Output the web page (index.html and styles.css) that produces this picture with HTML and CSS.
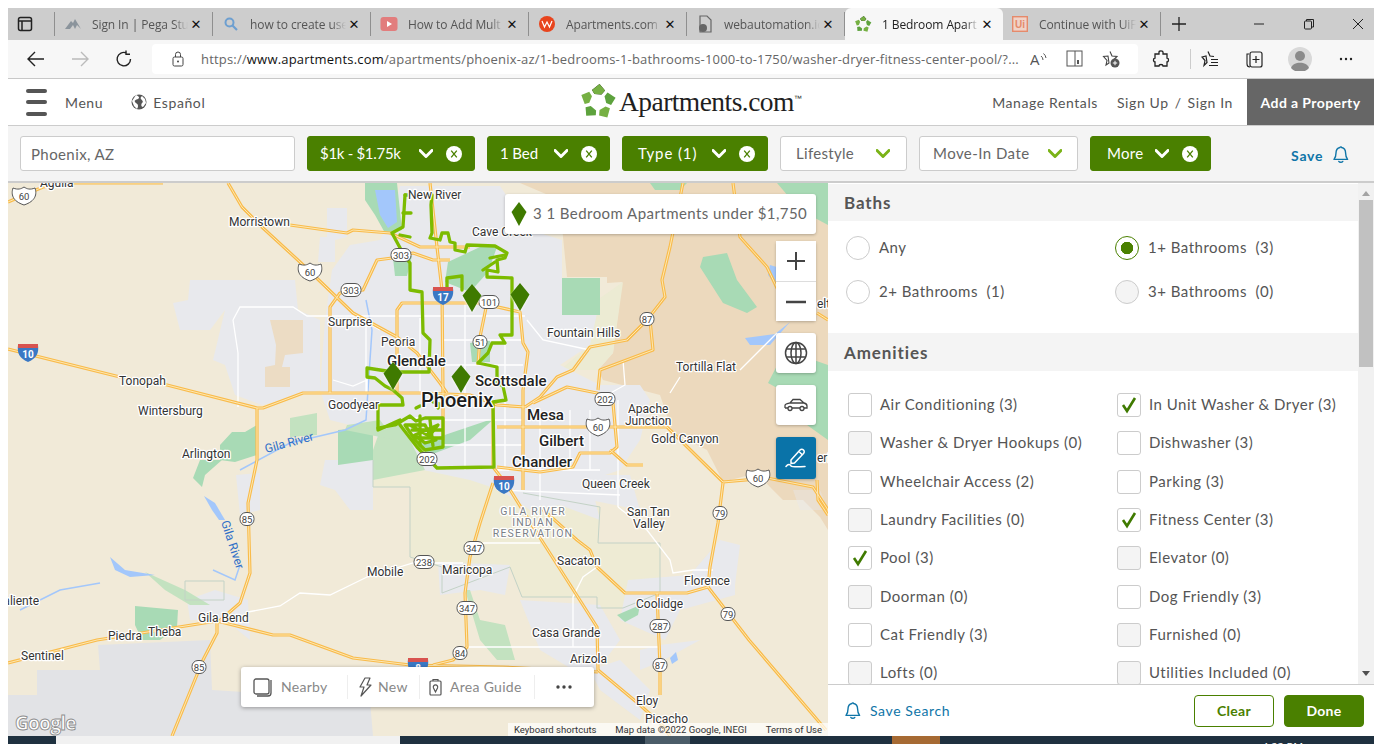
FILE: index.html
```html
<!DOCTYPE html>
<html lang="en">
<head>
<meta charset="utf-8">
<title>1 Bedroom Apartments</title>
<link rel="stylesheet" href="styles.css">
</head>
<body>
<svg class="defs" width="0" height="0" aria-hidden="true">
  <defs>
    <g id="wheel">
      <polygon id="wp" points="-6,-12 1.500,-18 7,-11.500 3.500,-7.500 -3.500,-8"/>
      <use href="#wp" fill="#76b043"/>
      <use href="#wp" transform="rotate(72)" fill="#5da23d"/>
      <use href="#wp" transform="rotate(144)" fill="#76b043"/>
      <use href="#wp" transform="rotate(216)" fill="#5da23d"/>
      <use href="#wp" transform="rotate(288)" fill="#76b043"/>
    </g>
    <g id="chev"><path d="M1 1.500 L7 7.500 L13 1.500" fill="none" stroke-width="3" stroke-linecap="round" stroke-linejoin="round"/></g>
    <g id="xc"><circle cx="8" cy="8" r="8" fill="#fff"/><path d="M5.200 4.600 L10.800 11.400 M10.800 4.600 L5.200 11.400" stroke="#4a8000" stroke-width="1.300" fill="none"/></g>
    <g id="bell"><path d="M8 1.500 C8 .6 9.600 .6 9.600 1.500 C12.600 2.200 13.600 4.600 13.600 7 C13.600 10 14 11.600 15.600 13.400 L2 13.400 C3.600 11.600 4 10 4 7 C4 4.600 5 2.200 8 1.500 Z M6.800 15.400 C7.600 16.600 10 16.600 10.800 15.400" fill="none" stroke-width="1.400" stroke-linejoin="round" stroke-linecap="round"/></g>
    <path id="pin" d="M0 -14 L9.500 -2.500 L0 14 L-9.500 -2.500 Z"/>
    <g id="hw">
      <path d="M8 349 L120 377 L167 385 L257 408 L263 408 L303 393 L423 393 L470 395 L497 405 L525 407"/>
      <path d="M493 405 L493 467 L507 485 L537 533 L597 627 L598 670 L640 705 L662 725 L670 736"/>
      <path d="M257 408 L257 460 L248 503 L250 573 L240 603 L217 623 L217 633 L203 660 L172 736"/>
      <path d="M8 663 L97 640 L217 621 L273 635 L290 635 L353 658 L410 665 L503 667 L598 672"/>
      <path d="M8 202 L43 187 L73 183 L163 183"/>
      <path d="M228 183 L242 207 L263 228 L300 262 L353 313 L397 337 L417 353 L440 383 L447 393"/>
      <path d="M290 225 L347 233 L353 230 L390 233 L420 247 L470 247"/>
      <path d="M330 393 L330 307 L340 293 L363 290 L377 260 L392 258 L413 253 L433 260 L450 260"/>
      <path d="M397 393 L397 310 L402 303 L480 303 L520 312 L523 343 L528 352 L523 390 L523 490"/>
      <path d="M430 183 L437 247 L442 290 L443 393 L443 440"/>
      <path d="M487 303 L480 337 L478 365"/>
      <path d="M683 183 L670 247 L662 280 L665 297 L647 320 L627 340 L590 347 L573 370 L557 377 L540 397 L525 407"/>
      <path d="M650 320 L653 350 L600 370 L598 390"/>
      <path d="M497 427 L667 427 L723 482 L767 478 L813 487 L828 510"/>
      <path d="M533 403 L567 387 L597 393 L613 403 L617 447 L610 453 L580 453 L573 467 L540 472 L497 467"/>
      <path d="M610 450 L627 465 L643 465"/>
      <path d="M723 483 L718 523 L710 567 L708 587 L749 640 L826 730"/>
      <path d="M597 567 L625 593 L687 593 L708 587"/>
      <path d="M657 593 L660 667 L660 695"/>
      <path d="M540 507 L577 540 L590 550 L597 567"/>
      <path d="M493 483 L480 523 L470 557 L465 593 L467 647 L453 660 L433 665"/>
      <path d="M733 183 L740 237 L767 267 L778 290"/>
      <path d="M817 313 L828 320"/>
      <path d="M817 480 L818 500 L828 515"/>
    </g>
    <g id="shield60"><path d="M-11 -8 C-6 -6 -3 -7 0 -9 C3 -7 6 -6 11 -8 C13 -2 12 5 0 9 C-12 5 -13 -2 -11 -8 Z" fill="#fff" stroke="#555" stroke-width="1"/></g>
    <g id="inter"><path d="M-10 -8 L10 -8 C11 0 9 5 0 9 C-9 5 -11 0 -10 -8 Z" fill="#3a78c4"/><path d="M-10 -9 L10 -9 L10 -5 L-10 -5 Z" fill="#d8534f"/></g>
  </defs>
</svg>

<header class="tabstrip">
  <button class="tab-mode" aria-label="Tab actions"><svg width="16" height="16" viewBox="0 0 16 16"><rect x="1.500" y="1.500" width="13" height="13" rx="2" fill="none" stroke="#222" stroke-width="1.500"/><path d="M1.500 5 H14.500 M5 5 V14" stroke="#222" stroke-width="1.500"/></svg></button>
  <div class="tab">
    <svg class="fav" width="18" height="12" viewBox="0 0 18 12"><path d="M1 11 L7 3 L9 5 L11 1 L17 11 L13 7 L11 11 L9 7 L6 11 Z" fill="#8b949c"/></svg>
    <span class="tab-title">Sign In | Pega Stu</span><span class="tab-x">✕</span>
  </div>
  <div class="tab">
    <svg class="fav" width="16" height="16" viewBox="0 0 16 16"><circle cx="6.500" cy="6.500" r="4" fill="none" stroke="#6d9fd0" stroke-width="2"/><path d="M9.500 9.500 L14 14" stroke="#6d9fd0" stroke-width="2.200"/></svg>
    <span class="tab-title">how to create use</span><span class="tab-x">✕</span>
  </div>
  <div class="tab">
    <svg class="fav" width="17" height="14" viewBox="0 0 17 14"><rect width="17" height="14" rx="3" fill="#e27d7d"/><path d="M6.500 4 L11.500 7 L6.500 10 Z" fill="#fff"/></svg>
    <span class="tab-title">How to Add Mult</span><span class="tab-x">✕</span>
  </div>
  <div class="tab">
    <svg class="fav" width="16" height="16" viewBox="0 0 16 16"><circle cx="8" cy="8" r="8" fill="#e8441d"/><path d="M3 5 L5.500 11 L8 6 L10.500 11 L13 5" fill="none" stroke="#fff" stroke-width="1.200"/></svg>
    <span class="tab-title">Apartments.com</span><span class="tab-x">✕</span>
  </div>
  <div class="tab">
    <svg class="fav" width="14" height="18" viewBox="0 0 14 18"><path d="M2 1 H9 L13 5 V17 H2 Z" fill="none" stroke="#666" stroke-width="1.200"/><circle cx="5" cy="13" r="4" fill="#666"/></svg>
    <span class="tab-title">webautomation.ic</span><span class="tab-x">✕</span>
  </div>
  <div class="tab tab-active">
    <svg class="fav" width="17" height="17" viewBox="-18 -18 36 36"><use href="#wheel"/></svg>
    <span class="tab-title">1 Bedroom Apart</span><span class="tab-x">✕</span>
  </div>
  <div class="tab tab-last">
    <svg class="fav" width="16" height="16" viewBox="0 0 16 16"><rect x=".7" y=".7" width="14.600" height="14.600" fill="#f0d3c8" stroke="#e58a6b" stroke-width="1.400"/><text x="3" y="12" class="ui-logo">Ui</text></svg>
    <span class="tab-title">Continue with UiF</span><span class="tab-x">✕</span>
  </div>
  <div class="tab-plus"><svg width="16" height="16" viewBox="0 0 16 16"><path d="M8 1 V15 M1 8 H15" stroke="#222" stroke-width="1.300"/></svg></div>
  <div class="win-ctrls">
    <svg width="12" height="12" viewBox="0 0 12 12"><path d="M1 6 H11" stroke="#222"/></svg>
    <svg width="12" height="12" viewBox="0 0 12 12"><rect x="1.500" y="3" width="7" height="8" rx="1" fill="none" stroke="#222"/><path d="M3.500 3 V1.500 H10.500 V9 H8.500" fill="none" stroke="#222"/></svg>
    <svg width="12" height="12" viewBox="0 0 12 12"><path d="M1 1 L11 11 M11 1 L1 11" stroke="#222"/></svg>
  </div>
</header>

<div class="toolbar">
  <div class="nav-btns">
    <svg width="18" height="16" viewBox="0 0 18 16"><path d="M8 1 L1 8 L8 15 M1 8 H17" fill="none" stroke="#222" stroke-width="1.400"/></svg>
    <svg width="18" height="16" viewBox="0 0 18 16"><path d="M10 1 L17 8 L10 15 M1 8 H17" fill="none" stroke="#bbb" stroke-width="1.400"/></svg>
    <svg width="18" height="18" viewBox="0 0 18 18"><path d="M15.500 9 A6.700 6.700 0 1 1 11.500 3 M11 .5 V4.200 H15" fill="none" stroke="#222" stroke-width="1.400"/></svg>
  </div>
  <div class="address">
    <svg class="lock" width="12" height="16" viewBox="0 0 12 16"><rect x="1" y="6" width="10" height="9" rx="1.500" fill="none" stroke="#444"/><path d="M3.500 6 V3.500 A2.500 2.500 0 0 1 8.500 3.500 V6" fill="none" stroke="#444"/><circle cx="6" cy="10.500" r="1" fill="#444"/></svg>
    <span class="url"><span class="url-dim">https://</span><span class="url-host">www.apartments.com</span><span class="url-dim">/apartments/phoenix-az/1-bedrooms-1-bathrooms-1000-to-1750/washer-dryer-fitness-center-pool/?...</span></span>
    <div class="addr-icons">
      <svg width="18" height="16" viewBox="0 0 18 16"><text x="0" y="14" class="read-a">A</text><path d="M11 5 A5 5 0 0 1 13 9 M13.500 2.500 A7 7 0 0 1 16 7" fill="none" stroke="#555"/></svg>
      <svg width="18" height="18" viewBox="0 0 18 18"><rect x="1" y="1" width="15" height="15" fill="none" stroke="#555"/><path d="M9 1 V16" stroke="#555"/><path d="M11 10 H13 V14 H11 Z" fill="#555"/></svg>
      <svg width="18" height="18" viewBox="0 0 18 18"><path d="M8 1.500 L10 6 L15 6.500 L11.500 10 M7 13 L4 15 L5 10.500 L1.500 6.500 L6 6 Z" fill="none" stroke="#444" stroke-width="1.100"/><circle cx="13" cy="13" r="4.500" fill="#555"/><path d="M13 10.800 V15.200 M10.800 13 H15.200" stroke="#fff"/></svg>
    </div>
  </div>
  <div class="tool-icons">
    <svg class="i-ext" width="18" height="18" viewBox="0 0 18 18"><path d="M7 2 C7 .5 11 .5 11 2 V4 H15 V8 C17 8 17 12 15 12 V16 H11 C11 14 7 14 7 16 H3 V12 C1 12 1 8 3 8 V4 H7 Z" fill="none" stroke="#222" stroke-width="1.300"/></svg>
    <span class="tool-sep"></span>
    <svg class="i-fav" width="18" height="18" viewBox="0 0 18 18"><path d="M7 1.500 L9 6 L13 6.500 M6 12.500 L3 15.500 L4 10.500 L1 7 L5 6 Z" fill="none" stroke="#222" stroke-width="1.200"/><path d="M10 9.500 H17 M10 12.500 H17 M8 15.500 H17" stroke="#222" stroke-width="1.200"/></svg>
    <svg class="i-col" width="18" height="18" viewBox="0 0 18 18"><path d="M4 4 H2 V14 C2 16 3 17 5 17" fill="none" stroke="#222" stroke-width="1.100"/><rect x="5" y="2" width="12" height="15" rx="2" fill="none" stroke="#222" stroke-width="1.200"/><path d="M11 6 V13 M7.500 9.500 H14.500" stroke="#222" stroke-width="1.200"/></svg>
    <svg class="i-ava" width="24" height="24" viewBox="0 0 24 24"><circle cx="12" cy="12" r="12" fill="#d9d9d9"/><circle cx="12" cy="9" r="5" fill="#8a8a8a"/><path d="M3 21 C5 14 19 14 21 21 A12 12 0 0 1 3 21 Z" fill="#8a8a8a"/></svg>
    <svg class="i-more" width="14" height="4" viewBox="0 0 14 4"><circle cx="2" cy="2" r="1.200" fill="#222"/><circle cx="7" cy="2" r="1.200" fill="#222"/><circle cx="12" cy="2" r="1.200" fill="#222"/></svg>
  </div>
</div>

<nav class="site-head">
  <div class="head-left">
    <div class="burger"><span></span><span></span><span></span></div>
    <span class="head-link menu-link">Menu</span>
    <svg class="globe" width="16" height="16" viewBox="0 0 16 16"><circle cx="8" cy="8" r="7.500" fill="#555"/><path d="M5 1 C8 2 9 4 7 5 C5 6 3 6 4 8 C5 10 7 9 7 12 C7 14 6 14 6 15 L3 12 L1 7 Z M11 2 L14 5 L15 9 L12 13 C10 13 10 10 11 9 C13 8 11 6 10 5 C9 4 10 3 11 2 Z" fill="#fff"/></svg>
    <span class="head-link">Español</span>
  </div>
  <div class="brand">
    <svg width="36" height="36" viewBox="-18 -18 36 36"><use href="#wheel"/></svg>
    <span class="brand-name">Apartments.com<sup>™</sup></span>
  </div>
  <div class="head-right">
    <span class="head-link manage">Manage Rentals</span>
    <span class="head-link">Sign Up</span>
    <span class="head-link slash">/</span>
    <span class="head-link">Sign In</span>
    <span class="add-prop">Add a Property</span>
  </div>
</nav>

<div class="filters">
  <div class="search">Phoenix, AZ</div>
  <div class="chip chip-on w-rent"><span>$1k - $1.75k</span><svg class="ch" width="14" height="9" viewBox="0 0 14 9"><use href="#chev" stroke="#fff"/></svg><svg class="cx" width="16" height="16" viewBox="0 0 16 16"><use href="#xc"/></svg></div>
  <div class="chip chip-on w-bed"><span>1 Bed</span><svg class="ch" width="14" height="9" viewBox="0 0 14 9"><use href="#chev" stroke="#fff"/></svg><svg class="cx" width="16" height="16" viewBox="0 0 16 16"><use href="#xc"/></svg></div>
  <div class="chip chip-on w-type"><span>Type (1)</span><svg class="ch" width="14" height="9" viewBox="0 0 14 9"><use href="#chev" stroke="#fff"/></svg><svg class="cx" width="16" height="16" viewBox="0 0 16 16"><use href="#xc"/></svg></div>
  <div class="chip w-life"><span>Lifestyle</span><svg class="ch" width="14" height="9" viewBox="0 0 14 9"><use href="#chev" stroke="#7ab317"/></svg></div>
  <div class="chip w-move"><span>Move-In Date</span><svg class="ch" width="14" height="9" viewBox="0 0 14 9"><use href="#chev" stroke="#7ab317"/></svg></div>
  <div class="chip chip-on w-more"><span>More</span><svg class="ch" width="14" height="9" viewBox="0 0 14 9"><use href="#chev" stroke="#fff"/></svg><svg class="cx" width="16" height="16" viewBox="0 0 16 16"><use href="#xc"/></svg></div>
  <div class="save"><span>Save</span><svg width="18" height="18" viewBox="0 0 18 18" class="blue-stroke"><use href="#bell"/></svg></div>
</div>

<main class="content">
  <section class="map">
    <svg class="map-art" width="820" height="553" viewBox="8 183 820 553">
      <rect x="8" y="183" width="820" height="553" fill="#f1ead8"/>
      <!-- desert -->
      <path class="desert" d="M520 183 L560 200 L563 237 L567 277 L607 277 L607 283 L622 282 L613 353 L598 370 L603 380 L660 395 L673 433 L707 450 L723 482 L757 473 L770 487 L783 500 L803 500 L820 517 L828 530 L828 183 Z"/>
      <path class="tint" d="M593 303 L623 282 L613 353 L598 370 L560 370 L590 345 Z"/>
      <!-- reservation tint and boundary -->
      <path class="res" d="M523 493 L600 507 L598 543 L660 543 L660 593 L623 608 L597 608 L597 597 L522 597 L510 567 L442 593 L442 567 L410 557 L410 487 L373 487 L373 460 L480 470 L500 480 Z"/>
      <path class="urban" d="M400 186 L500 186 L530 230 L562 240 L562 300 L600 300 L590 345 L560 365 L600 385 L640 385 L650 400 L640 440 L620 470 L590 480 L600 520 L560 505 L530 510 L500 490 L470 480 L400 465 L370 430 L330 420 L320 390 L325 320 L332 270 L350 245 L380 240 L395 210 Z"/>
      <path class="urban" d="M173 303 L188 300 L190 280 L295 280 L298 310 L320 320 L320 390 L300 395 L262 405 L235 395 L225 365 L213 360 L225 310 L210 330 L180 330 Z"/>
      <path class="urban" d="M327 208 L347 208 L347 237 L335 240 L335 262 L318 262 L320 237 L327 237 Z"/>
      <path class="urban" d="M236 475 L260 473 L260 510 L240 515 Z"/>
      <path class="urban" d="M325 460 L373 460 L373 510 L350 510 L335 490 L320 485 Z"/>
      <path class="urban" d="M187 600 L215 590 L248 600 L250 640 L225 620 L190 620 Z"/>
      <path class="urban" d="M438 562 L510 565 L505 595 L480 590 L440 595 Z"/>
      <path class="urban" d="M520 600 L600 605 L620 640 L590 680 L540 650 L530 625 Z"/>
      <path class="urban" d="M628 580 L690 575 L720 540 L740 545 L735 585 L735 595 L680 610 L665 640 L620 620 Z"/>
      <path class="urban" d="M573 475 L630 475 L640 510 L590 500 Z"/>
      <path class="urban" d="M640 650 L660 645 L700 640 L660 662 L640 670 Z"/>
      <path class="urban" d="M620 660 L650 690 L640 720 L600 690 L590 670 Z"/>
      <path class="range" d="M8 695 L37 695 L37 670 L100 670 L98 645 L210 640 L212 690 L370 700 L373 736 L8 736 Z"/>
      <path class="desert-soft" d="M270 320 L303 320 L303 353 L285 355 L282 367 L290 367 L290 387 L265 387 L265 367 L275 365 L276 345 Z"/>
      <path class="urban" d="M793 490 L820 490 L828 510 L800 510 Z" opacity=".4"/>
      <!-- greens -->
      <path class="park" d="M365 183 L397 183 L402 230 L385 233 L375 215 L365 200 Z"/>
      <path class="water" d="M375 190 L395 190 L397 222 L388 228 L380 215 Z"/>
      <path class="park" d="M393 258 L412 256 L407 276 L395 276 Z"/>
      <path class="park" d="M448 262 L480 247 L497 247 L488 272 L470 292 L445 282 Z"/>
      <path class="park" d="M562 278 L600 278 L600 315 L562 315 Z"/>
      <path class="park" d="M703 257 L727 253 L737 280 L757 307 L747 313 L723 303 L700 267 Z"/>
      <path class="park" d="M650 183 L687 183 L680 190 L655 190 Z"/>
      <path class="park" d="M777 183 L828 183 L828 225 L800 210 Z"/>
      <path class="park" d="M768 383 L785 350 L828 365 L828 440 L800 420 L790 395 Z"/>
      <path class="park" d="M470 343 L490 340 L490 362 L472 362 Z"/>
      <path class="park" d="M338 430 L373 427 L373 460 L338 465 Z"/>
      <path class="park" d="M220 445 L232 432 L245 432 L257 425 L257 455 L235 462 L220 460 Z"/>
      <path class="park-light" d="M290 418 L317 413 L317 435 L290 437 Z"/>
      <path class="park-light" d="M380 430 L400 420 L425 470 L373 480 L373 450 Z"/>
      <path class="park" d="M415 445 L495 418 L470 440 L430 455 Z"/>
      <path class="park-light" d="M347 425 L380 420 L395 440 L345 430 Z"/>
      <path class="park" d="M200 460 L222 460 L205 475 L202 487 L193 478 Z"/>
      <path class="park" d="M135 606 L178 610 L177 627 L160 640 L142 640 L135 625 Z"/>
      <path class="park-light" d="M145 572 L185 590 L210 605 L190 605 L165 590 Z"/>
      <path class="park-light" d="M465 590 L470 590 L480 620 L505 625 L515 660 L497 660 L480 640 Z"/>
      <path class="park" d="M617 615 L640 605 L638 615 L625 622 Z"/>
      <path class="water" d="M204 496 L215 503 L225 520 L219 520 L212 510 Z"/>
      <path class="water" d="M110 557 L125 570 L155 575 L130 577 L115 570 Z"/>
      <path class="water" d="M670 658 L676 652 L678 660 L672 664 Z"/>
      <path class="water" d="M745 338 L775 334 L790 322 L770 345 L750 345 Z"/>
      <path class="water" d="M770 265 L780 268 L776 285 L768 275 Z"/>
      <path class="river" d="M366 300 L372 330 L366 420 L345 430 L290 443 L240 470 M100 583 L60 590 L20 610 M213 570 L235 580 L240 565"/>
      <path class="bound" d="M523 493 L600 507 L598 543 L660 543 L660 593 L623 608 L597 608 L597 597 L522 597 L510 567 L442 593 L442 567 L410 557 L410 487 L373 487 L373 460"/>
      <path class="bound" d="M185 581 L224 581 L224 600 L185 600 Z"/>
      <!-- minor roads -->
      <g class="minor">
        <path d="M233 320 L240 307 L293 307 L307 316 L420 316 M233 320 L238 353 L238 407"/>
        <path d="M333 380 L353 386 L367 380 L367 393 M380 330 L366 322 L366 393 M420 316 L525 316"/>
        <path d="M248 612 L280 606 L300 593 L330 595 L367 577 L413 563 L463 563"/>
        <path d="M483 543 L540 543 M597 567 L583 577 L573 597 L573 647 L660 647 M467 647 L573 647"/>
        <path d="M618 507 L647 530 L670 560 L673 573 L693 570 L713 570"/>
        <path d="M527 320 L543 340 L590 350 M623 360 L625 385 L598 400 M680 377 L670 393 M740 370 L777 333"/>
        <path d="M443 340 L523 340 M443 365 L523 365 M400 365 L443 365 M420 318 L420 393 M465 303 L465 470 M505 340 L505 470 M443 420 L523 420 M443 445 L523 445 M497 470 L600 470 M540 410 L540 500 M570 410 L570 470 M590 410 L590 470 M497 490 L620 495 M618 400 L618 507 M405 418 L443 418"/>
      </g>
      <!-- highways -->
      <g class="road-out"><use href="#hw"/></g>
      <g class="road-in"><use href="#hw"/></g>
      <!-- service boundary -->
      <g class="zone">
        <path d="M405 195 L432 195 L431 205 L432 233 L430 238 L440 240 L442 233 L448 233 L450 242 L455 243 L455 250 L465 252 L467 245 L495 246 L507 253 L505 258 L497 260 L498 272 L487 270 L487 277 L512 278 L512 335 L500 335 L505 343 L492 343 L488 353 L478 363 L497 367 L497 383 L503 386 L506 400 L493 402 L494 467 L437 468 L417 447 L400 425"/>
        <path d="M405 195 L403 227 L392 233 L405 257 L410 263 L410 290 L422 292 L423 333 L430 340 L429 372 L393 372 L367 368 L367 377 L375 378 L385 386 L393 390 L402 398 L403 405 L378 405 L378 430 L400 420"/>
        <path d="M403 213 L411 213 M400 235 L410 237 M447 278 L447 290 M447 278 L462 276 L462 290 M490 258 L505 255 M483 270 L495 262"/>
        <path d="M378 428 L395 425 L410 416 L416 421 L425 418 L443 418 L443 447 L425 450 L415 440 L405 425 L425 425 L430 435 L438 425 L415 435 L425 443 L436 440 L410 425"/>
        <path d="M420 416 L420 445 M430 420 L433 446 M412 430 L442 430 M416 438 L442 438"/>
        <path d="M416 408 L420 406 M438 408 L440 404 L433 402" />
      </g>
      <!-- town labels -->
      <g class="lbl">
        <text x="40" y="187">Aguila</text><text x="229" y="226">Morristown</text><text x="408" y="199">New River</text><text x="472" y="236">Cave Creek</text>
        <text x="328" y="326">Surprise</text><text x="381" y="346">Peoria</text><text x="328" y="409">Goodyear</text><text x="119" y="385">Tonopah</text><text x="138" y="415">Wintersburg</text><text x="182" y="458">Arlington</text>
        <text x="547" y="337">Fountain Hills</text><text x="676" y="371">Tortilla Flat</text><text x="628" y="413">Apache</text><text x="625" y="425">Junction</text><text x="651" y="443">Gold Canyon</text><text x="582" y="488">Queen Creek</text>
        <text x="627" y="516">San Tan</text><text x="633" y="528">Valley</text><text x="557" y="565">Sacaton</text><text x="442" y="574">Maricopa</text><text x="367" y="576">Mobile</text><text x="684" y="585">Florence</text><text x="636" y="608">Coolidge</text><text x="532" y="637">Casa Grande</text><text x="570" y="663">Arizola</text><text x="636" y="705">Eloy</text><text x="645" y="723">Picacho</text>
        <text x="198" y="622">Gila Bend</text><text x="148" y="636">Theba</text><text x="108" y="640">Piedra</text><text x="21" y="660">Sentinel</text><text x="39" y="605" text-anchor="end">Caliente</text><text x="817" y="308">elt</text><text x="817" y="462">eric</text>
      </g>
      <g class="lbl lbl-big">
        <text x="387" y="366">Glendale</text><text x="475" y="386">Scottsdale</text><text x="527" y="420">Mesa</text><text x="539" y="446">Gilbert</text><text x="512" y="467">Chandler</text>
      </g>
      <text class="lbl-city" x="421" y="407">Phoenix</text>
      <g class="lbl-res"><text x="533" y="515">GILA RIVER</text><text x="533" y="526">INDIAN</text><text x="533" y="537">RESERVATION</text></g>
      <text class="lbl-river" transform="translate(266 453) rotate(-15)">Gila River</text>
      <text class="lbl-river" transform="translate(221 522) rotate(72)">Gila River</text>
      <!-- shields -->
      <g class="shields">
        <g transform="translate(24 196)"><use href="#shield60"/><text y="3.500">60</text></g>
        <g transform="translate(310 272)"><use href="#shield60"/><text y="3.500">60</text></g>
        <g transform="translate(598 427)"><use href="#shield60"/><text y="3.500">60</text></g>
        <g transform="translate(758 478)"><use href="#shield60"/><text y="3.500">60</text></g>
        <g transform="translate(401 255)"><rect x="-10" y="-6.500" width="20" height="13" rx="6"/><text y="3.500">303</text></g>
        <g transform="translate(351 290)"><rect x="-10" y="-6.500" width="20" height="13" rx="6"/><text y="3.500">303</text></g>
        <g transform="translate(489 302)"><rect x="-10" y="-6.500" width="20" height="13" rx="6"/><text y="3.500">101</text></g>
        <g transform="translate(480 342)"><rect x="-7" y="-6.500" width="14" height="13" rx="6"/><text y="3.500">51</text></g>
        <g transform="translate(647 319)"><rect x="-7" y="-6.500" width="14" height="13" rx="6"/><text y="3.500">87</text></g>
        <g transform="translate(605 399)"><rect x="-10" y="-6.500" width="20" height="13" rx="6"/><text y="3.500">202</text></g>
        <g transform="translate(427 459)"><rect x="-10" y="-6.500" width="20" height="13" rx="6"/><text y="3.500">202</text></g>
        <g transform="translate(720 513)"><rect x="-7" y="-6.500" width="14" height="13" rx="6"/><text y="3.500">79</text></g>
        <g transform="translate(728 614)"><rect x="-7" y="-6.500" width="14" height="13" rx="6"/><text y="3.500">79</text></g>
        <g transform="translate(474 548)"><rect x="-10" y="-6.500" width="20" height="13" rx="6"/><text y="3.500">347</text></g>
        <g transform="translate(467 608)"><rect x="-10" y="-6.500" width="20" height="13" rx="6"/><text y="3.500">347</text></g>
        <g transform="translate(424 562)"><rect x="-10" y="-6.500" width="20" height="13" rx="6"/><text y="3.500">238</text></g>
        <g transform="translate(660 626)"><rect x="-10" y="-6.500" width="20" height="13" rx="6"/><text y="3.500">287</text></g>
        <g transform="translate(460 653)"><rect x="-7" y="-6.500" width="14" height="13" rx="6"/><text y="3.500">84</text></g>
        <g transform="translate(660 665)"><rect x="-7" y="-6.500" width="14" height="13" rx="6"/><text y="3.500">87</text></g>
        <g transform="translate(247 519)"><rect x="-7" y="-6.500" width="14" height="13" rx="6"/><text y="3.500">85</text></g>
        <g transform="translate(199 667)"><rect x="-7" y="-6.500" width="14" height="13" rx="6"/><text y="3.500">85</text></g>
      </g>
      <g class="shields-i">
        <g transform="translate(443 296)"><use href="#inter"/><text y="5">17</text></g>
        <g transform="translate(504 485)"><use href="#inter"/><text y="5">10</text></g>
        <g transform="translate(28 353)"><use href="#inter"/><text y="5">10</text></g>
        <g transform="translate(418 667)"><use href="#inter"/><text y="5">8</text></g>
      </g>
      <!-- markers -->
      <g class="pins">
        <use href="#pin" transform="translate(472 298)"/>
        <use href="#pin" transform="translate(520 297)"/>
        <use href="#pin" transform="translate(393 376)"/>
        <use href="#pin" transform="translate(461 379)"/>
      </g>
      <text class="g-logo" x="15" y="730">Google</text>
    </svg>

    <div class="count-pop">
      <svg width="16" height="26" viewBox="-8 -13 16 26"><path d="M0 -12 L7.500 -2 L0 12 L-7.500 -2 Z" fill="#3f7a00"/></svg>
      <span>3 1 Bedroom Apartments under $1,750</span>
    </div>

    <div class="map-ctrls">
      <div class="zoom-box">
        <div class="ctrl"><svg width="20" height="20" viewBox="0 0 20 20"><path d="M10 1 V19 M1 10 H19" stroke="#444" stroke-width="2"/></svg></div>
        <div class="ctrl ctrl-top"><svg width="20" height="4" viewBox="0 0 20 4"><path d="M0 2 H20" stroke="#444" stroke-width="2.500"/></svg></div>
      </div>
      <div class="ctrl ctrl-single"><svg width="24" height="24" viewBox="0 0 24 24" fill="none" stroke="#444" stroke-width="1.500"><circle cx="12" cy="12" r="10.500"/><ellipse cx="12" cy="12" rx="5" ry="10.500"/><path d="M2.500 8 H21.500 M2.500 16 H21.500 M12 1.500 V22.500"/></svg></div>
      <div class="ctrl ctrl-single"><svg width="24" height="14" viewBox="0 0 24 14" fill="none" stroke="#444" stroke-width="1.300"><path d="M1 10 V7.500 C1 6 4 5.500 6 5 L9 1.500 H16 L20 5 C22 5.500 23 6 23 8 V10 H20 M16 10 H8 M4 10 H1 M6 5 H20"/><circle cx="6" cy="10.500" r="2"/><circle cx="18" cy="10.500" r="2"/></svg></div>
      <div class="ctrl ctrl-single ctrl-draw"><svg width="22" height="22" viewBox="0 0 22 22" fill="none" stroke="#fff" stroke-width="1.500" stroke-linejoin="round"><path d="M6 13 L15 3 C16 2 17.500 2 18.500 3 C19.500 4 19.500 5.500 18.500 6.500 L9.500 16 L6 16.500 Z M14 4.500 L17.500 8"/><path d="M1 19.500 C3 17 5 17 6 19 C7 20 10 20 20 19.500" stroke-linecap="round"/></svg></div>
    </div>

    <div class="map-tools">
      <div class="tool t-near"><svg width="20" height="20" viewBox="0 0 20 20" fill="none" stroke="#555" stroke-width="1.300"><rect x="1" y="2" width="15" height="15" rx="2"/><path d="M18 3 V16 C18 18 17 19 15 19 H4"/></svg><span>Nearby</span></div>
      <div class="tool t-new"><svg width="14" height="20" viewBox="0 0 14 20" fill="none" stroke="#555" stroke-width="1.200" stroke-linejoin="round"><path d="M7 1 H12 L9 8 H13 L3 19 L6 10 H2 Z"/></svg><span>New</span></div>
      <div class="tool t-area"><svg width="13" height="18" viewBox="0 0 13 18" fill="none" stroke="#555" stroke-width="1.200"><rect x="1" y="3" width="11" height="14" rx="1"/><path d="M4 3 V1.500 H9 V3"/><path d="M6.500 14 L4.500 10 A2.200 2.200 0 1 1 8.500 10 Z"/></svg><span>Area Guide</span></div>
      <div class="tool t-more"><svg width="16" height="4" viewBox="0 0 16 4"><circle cx="2" cy="2" r="1.700" fill="#444"/><circle cx="8" cy="2" r="1.700" fill="#444"/><circle cx="14" cy="2" r="1.700" fill="#444"/></svg></div>
    </div>

    <div class="attrib"><span>Keyboard shortcuts</span><span>Map data ©2022 Google, INEGI</span><span>Terms of Use</span></div>
  </section>

  <aside class="panel">
    <div class="panel-main">
      <div class="panel-scroll">
        <h3 class="sec-head sec-first">Baths</h3>
        <div class="radio-grid">
          <label class="opt"><span class="radio"></span><span>Any</span></label>
          <label class="opt"><span class="radio radio-on"></span><span>1+ Bathrooms&nbsp; (3)</span></label>
          <label class="opt"><span class="radio"></span><span>2+ Bathrooms&nbsp; (1)</span></label>
          <label class="opt"><span class="radio radio-off"></span><span>3+ Bathrooms&nbsp; (0)</span></label>
        </div>
        <h3 class="sec-head">Amenities</h3>
        <div class="check-grid">
          <label class="opt"><span class="box"></span><span>Air Conditioning (3)</span></label>
          <label class="opt"><span class="box box-on"><svg width="18" height="18" viewBox="0 0 18 18"><path d="M3 9 L7 15 L15 2" fill="none" stroke="#3f7a00" stroke-width="2.600"/></svg></span><span>In Unit Washer &amp; Dryer (3)</span></label>
          <label class="opt"><span class="box box-off"></span><span>Washer &amp; Dryer Hookups (0)</span></label>
          <label class="opt"><span class="box"></span><span>Dishwasher (3)</span></label>
          <label class="opt"><span class="box"></span><span>Wheelchair Access (2)</span></label>
          <label class="opt"><span class="box"></span><span>Parking (3)</span></label>
          <label class="opt"><span class="box box-off"></span><span>Laundry Facilities (0)</span></label>
          <label class="opt"><span class="box box-on"><svg width="18" height="18" viewBox="0 0 18 18"><path d="M3 9 L7 15 L15 2" fill="none" stroke="#3f7a00" stroke-width="2.600"/></svg></span><span>Fitness Center (3)</span></label>
          <label class="opt"><span class="box box-on"><svg width="18" height="18" viewBox="0 0 18 18"><path d="M3 9 L7 15 L15 2" fill="none" stroke="#3f7a00" stroke-width="2.600"/></svg></span><span>Pool (3)</span></label>
          <label class="opt"><span class="box box-off"></span><span>Elevator (0)</span></label>
          <label class="opt"><span class="box box-off"></span><span>Doorman (0)</span></label>
          <label class="opt"><span class="box"></span><span>Dog Friendly (3)</span></label>
          <label class="opt"><span class="box"></span><span>Cat Friendly (3)</span></label>
          <label class="opt"><span class="box box-off"></span><span>Furnished (0)</span></label>
          <label class="opt"><span class="box box-off"></span><span>Lofts (0)</span></label>
          <label class="opt"><span class="box box-off"></span><span>Utilities Included (0)</span></label>
        </div>
      </div>
      <div class="scrollbar">
        <span class="sb-up"></span>
        <span class="sb-thumb"></span>
        <span class="sb-down"></span>
      </div>
    </div>
    <div class="panel-foot">
      <svg class="blue-stroke" width="18" height="18" viewBox="0 0 18 18"><use href="#bell"/></svg>
      <span class="save-search">Save Search</span>
      <button class="btn btn-clear">Clear</button>
      <button class="btn btn-done">Done</button>
    </div>
  </aside>
</main>

<footer class="taskbar">
  <span class="tb-a"></span><span class="tb-b"></span><span class="tb-c"></span><span class="tb-d"></span><span class="tb-f"></span><span class="tb-g"></span><span class="tb-time">4:22 PM</span>
</footer>
</body>
</html>
```
FILE: styles.css
```css
* { box-sizing: border-box; }
html { overflow: hidden; background: #fff; }
body { margin: 8px 8px 0; width: 1366px; height: 736px; overflow: hidden; font-family: Lato, "Open Sans", sans-serif; color: #555; }
.defs { position: absolute; }
svg { display: block; flex: none; }

/* browser chrome */
.tabstrip { height: 32px; background: #cdcdcd; display: flex; align-items: stretch; font-family: "Open Sans", sans-serif; font-size: 12px; color: #333; }
.tab-mode { width: 47px; flex: none; padding: 0 0 0 9px; border: 0; background: none; display: flex; align-items: center; border-right: 1px solid #8f8f8f; margin: 4px 0; }
.tab { width: 158px; flex: none; display: flex; align-items: center; padding-left: 9px; padding-right: 8px; border-right: 1px solid #8f8f8f; margin: 4px 0; position: relative; }
.fav { width: 18px; margin-right: 10px; }
.tab-title { flex: 1; min-width: 0; white-space: nowrap; overflow: hidden; -webkit-mask-image: linear-gradient(90deg, #000 85%, transparent); mask-image: linear-gradient(90deg, #000 85%, transparent); letter-spacing: -.1px; color: #555; }
.tab-x { width: 16px; flex: none; font-size: 13px; color: #111; text-align: center; font-family: "DejaVu Sans", sans-serif; }
.tab-active { background: #f7f7f7; border-radius: 6px 6px 0 0; margin: 0; border-right: 0; width: 158px; }
.tab-active .tab-title { color: #222; }
.tab-last { padding-left: 8px; }
.tab-plus { width: 36px; flex: none; display: flex; align-items: center; justify-content: center; }
.win-ctrls { flex: 1; padding: 0 10px 0 56px; display: flex; align-items: center; justify-content: space-between; }
.ui-logo { font: bold 10px "Liberation Sans", sans-serif; fill: #e58a6b; }

.toolbar { height: 39px; background: #f7f7f7; border-bottom: 1px solid #c8c8c8; display: flex; align-items: center; padding-bottom: 1px; }
.nav-btns { width: 144px; display: flex; align-items: center; justify-content: space-between; padding: 0 19px 0 19px; }
.address { width: 986px; height: 30px; background: #fff; border-radius: 4px; display: flex; align-items: center; padding: 0 18px 0 20px; }
.lock { margin-right: 17px; }
.url { flex: 1; white-space: nowrap; overflow: hidden; font: 13px "Open Sans", sans-serif; letter-spacing: .19px; }
.url-dim { color: #666; }
.url-host { color: #111; }
.addr-icons { display: flex; gap: 18px; align-items: center; }
.read-a { font: 15px "Open Sans", sans-serif; fill: #555; }
.tool-icons { flex: 1; display: flex; align-items: center; padding-left: 14px; }
.tool-sep { width: 1px; height: 20px; background: #ccc; margin: 0 10px 0 20px; }
.i-col { margin-left: 26px; }
.i-ava { margin-left: 25px; }
.i-more { margin-left: 27px; }

/* site header */
.site-head { height: 47px; background: #fff; border-bottom: 1px solid #ccc; display: flex; align-items: stretch; position: relative; font-size: 14px; }
.head-left { width: 572px; display: flex; align-items: center; padding-left: 18px; }
.burger { width: 21px; height: 27px; display: flex; flex-direction: column; justify-content: space-between; margin-right: 18px; }
.burger span { height: 4px; background: #555; border-radius: 2px; }
.head-link { white-space: nowrap; color: #555; letter-spacing: .6px; }
.menu-link { margin-right: 28px; }
.globe { margin-right: 6px; }
.brand { width: 300px; display: flex; align-items: center; gap: 3px; }
.brand-name { font: 27.500px "Liberation Serif", serif; color: #1f1f1f; letter-spacing: -.55px; white-space: nowrap; }
.brand-name sup { font-size: 8px; vertical-align: 10px; line-height: 0; font-family: "Liberation Sans", sans-serif; }
.head-right { flex: 1; display: flex; align-items: center; justify-content: flex-end; gap: 6px; }
.manage { margin-right: 13px; }
.add-prop { background: #666; color: #fff; align-self: stretch; width: 127px; margin-left: 8px; display: flex; align-items: center; justify-content: center; font-weight: 700; letter-spacing: .4px; }

/* filter bar */
.filters { height: 57px; background: #f4f4f4; border-bottom: 2px solid #ccc; display: flex; align-items: flex-start; padding: 10px 0 0 12px; font-size: 15px; }
.search { width: 275px; flex: none; height: 35px; background: #fff; border: 1px solid #ccc; border-radius: 3px; display: flex; align-items: center; padding-left: 10px; margin-right: 12px; color: #666; letter-spacing: .4px; }
.chip { height: 35px; flex: none; background: #fff; border: 1px solid #ccc; border-radius: 3px; display: flex; align-items: center; padding-left: 15px; margin-right: 12px; color: #666; letter-spacing: .3px; white-space: nowrap; }
.chip > span { padding-bottom: 2px; }
.chip-on { background: #4a8000; border-color: #4a8000; color: #fff; }
.ch { margin-left: auto; margin-right: 13px; }
.cx { margin-right: 12px; }
.w-rent { width: 168px; padding-left: 12px; letter-spacing: -.3px; }
.w-bed { width: 123px; padding-left: 12px; letter-spacing: -.1px; }
.w-type { width: 146px; padding-left: 15px; letter-spacing: .9px; }
.w-life { width: 127px; padding-right: 3px; }
.w-move { width: 159px; padding-left: 13px; padding-right: 2px; letter-spacing: .45px; }
.w-more { width: 121px; padding-left: 16px; }
.save { margin-left: 68px; display: flex; align-items: center; gap: 9px; color: #0f75a8; height: 38px; font-weight: 700; letter-spacing: .8px; font-size: 14px; }
.blue-stroke { stroke: #0f75a8; }

/* content */
.content { display: flex; height: 553px; }
.map { width: 820px; position: relative; overflow: hidden; }
.map-art { width: 820px; height: 553px; font-family: Roboto, sans-serif; }
.desert { fill: #ecd9bd; }
.desert-soft { fill: #ecdcc4; }
.tint { fill: #ecebd3; }
.res { fill: #eeebd4; }
.urban { fill: #e8e9ed; }
.range { fill: #e2e3e6; }
.park { fill: #a8dab5; }
.park-light { fill: #c3e2c0; }
.water { fill: #a3c7fb; }
.river { fill: none; stroke: #a3c7fb; stroke-width: 1.500; }
.bound { fill: none; stroke: #c3d2c6; stroke-width: 1; }
.minor { fill: none; stroke: #fff; stroke-width: 1.300; }
.road-out { fill: none; stroke: #f9bb4a; stroke-width: 3.200; stroke-linejoin: round; }
.road-in { fill: none; stroke: #fde8b4; stroke-width: 1; stroke-linejoin: round; }
.zone { fill: none; stroke: #7cbb00; stroke-width: 3.300; stroke-linejoin: round; stroke-linecap: round; }
.lbl text, .lbl-city, .lbl-res text { paint-order: stroke; stroke: #fff; stroke-width: 2.500px; stroke-linejoin: round; }
.lbl text { font-size: 12px; fill: #333; }
.lbl-big text { font-size: 15px; font-weight: 500; fill: #222; }
.lbl-city { font-size: 20px; font-weight: 500; fill: #1c1c1c; }
.lbl-res text { font-size: 10.500px; letter-spacing: 1.200px; fill: #7a8087; text-anchor: middle; }
.lbl-river { font-size: 12px; fill: #2f6fc7; }
.shields rect { fill: #fff; stroke: #555; stroke-width: 1; }
.shields text { font-size: 9.500px; fill: #444; text-anchor: middle; }
.shields-i text { font-size: 10px; font-weight: 700; fill: #fff; text-anchor: middle; }
.pins { fill: #3f7a00; filter: drop-shadow(0 1px 1px rgba(255,255,255,.9)); }
.g-logo { font-size: 19px; font-weight: 700; fill: #fff; stroke: #8e8e8e; stroke-width: .9px; letter-spacing: -.7px; font-family: "Open Sans", sans-serif; }

.count-pop { position: absolute; left: 497px; top: 11px; width: 311px; height: 40px; background: #fff; border-radius: 3px; box-shadow: 0 1px 3px rgba(0,0,0,.25); display: flex; align-items: center; gap: 6px; padding-left: 6px; font-size: 15px; color: #666; letter-spacing: .44px; white-space: nowrap; }
.count-pop span { padding-bottom: 2px; }
.map-ctrls { position: absolute; left: 768px; top: 58px; width: 40px; display: flex; flex-direction: column; gap: 12px; }
.zoom-box { display: flex; flex-direction: column; border-radius: 3px; background: #fff; box-shadow: 0 1px 3px rgba(0,0,0,.25); }
.ctrl { height: 40px; display: flex; align-items: center; justify-content: center; background: #fff; }
.ctrl-top { border-top: 1px solid #ddd; }
.ctrl-single { border-radius: 3px; box-shadow: 0 1px 3px rgba(0,0,0,.25); }
.ctrl-draw { background: #0a73a8; height: 42px; }
.map-tools { position: absolute; left: 233px; top: 484px; width: 353px; height: 40px; background: #fff; border-radius: 3px; box-shadow: 0 1px 4px rgba(0,0,0,.35); display: flex; align-items: center; font-size: 14px; color: #888; letter-spacing: .3px; }
.map-tools span { padding-bottom: 2px; }
.tool { display: flex; align-items: center; height: 24px; white-space: nowrap; }
.tool + .tool { border-left: 1px solid #eee; }
.t-near { width: 106px; padding-left: 12px; gap: 8px; }
.t-new { width: 72px; padding-left: 10px; gap: 6px; }
.t-area { width: 115px; padding-left: 9px; gap: 8px; }
.t-more { flex: 1; padding-left: 21px; }
.attrib { position: absolute; right: 0; bottom: 0; height: 13px; width: 320px; background: rgba(255,255,255,.7); display: flex; justify-content: space-between; align-items: center; padding: 0 6px; font: 9.500px Roboto, sans-serif; color: #333; white-space: nowrap; }

/* filter panel */
.panel { flex: 1; display: flex; flex-direction: column; background: #fff; font-size: 15px; letter-spacing: .5px; color: #555; }
.panel-main { height: 501px; display: flex; overflow: hidden; }
.panel-scroll { flex: 1; overflow: hidden; }
.sec-head { margin: 0; height: 38px; background: #f4f4f4; font-size: 17px; font-weight: 700; color: #555; display: flex; align-items: center; padding-left: 16px; letter-spacing: .9px; }
.sec-first { height: 37px; margin-top: 1px; }
.radio-grid { display: grid; grid-template-columns: 269px 1fr; grid-auto-rows: 44px; padding: 5px 0 19px 18px; }
.check-grid { display: grid; grid-template-columns: 269px 1fr; grid-auto-rows: 38.300px; padding: 15px 0 0 20px; }
.opt { display: flex; align-items: center; white-space: nowrap; }
.opt > span:last-child { padding-bottom: 2px; }
.radio { width: 24px; height: 24px; border-radius: 50%; border: 1px solid #ccc; margin-right: 9px; flex: none; background: #fff; }
.radio-on { border-color: #4a8000; background: radial-gradient(circle, #4a8000 0 6px, #fff 6.500px); }
.radio-off { background: #f4f4f4; }
.box { width: 24px; height: 24px; border: 1px solid #ccc; border-radius: 3px; margin-right: 8px; flex: none; background: #fff; display: flex; align-items: center; justify-content: center; }
.box-off { background: #f4f4f4; }
.scrollbar { width: 16px; background: #f1f1f1; display: flex; flex-direction: column; align-items: center; position: relative; }
.sb-up { margin-top: 8px; border: 4px solid transparent; border-top: 0; border-bottom: 5px solid #a3a3a3; }
.sb-thumb { width: 14px; height: 167px; background: #c1c1c1; margin-top: 4px; }
.sb-down { margin-top: auto; margin-bottom: 8px; border: 4px solid transparent; border-bottom: 0; border-top: 5px solid #505050; }
.panel-foot { flex: 1; border-top: 1px solid #ccc; display: flex; align-items: center; padding: 0 10px 0 16px; }
.save-search { color: #0f75a8; margin-left: 8px; font-size: 14px; letter-spacing: .6px; }
.btn { width: 80px; height: 32px; border-radius: 4px; font: 700 14px Lato, sans-serif; letter-spacing: .3px; }
.btn-clear { margin-left: auto; background: #fff; border: 1px solid #4a8000; color: #4a8000; }
.btn-done { margin-left: 10px; background: #4a8000; border: 1px solid #4a8000; color: #fff; }

/* taskbar */
.taskbar { height: 8px; background: #1f3140; display: flex; overflow: hidden; }
.taskbar span { display: block; height: 8px; }
.tb-a { width: 48px; }
.tb-b { width: 344px; background: #f1f1f1; }
.tb-c { width: 245px; }
.tb-d { width: 45px; background: #4b5c68; }
.tb-f { width: 202px; }
.tb-g { width: 48px; background: #a66a33; }
.tb-time { margin-left: 322px; font: 11px/1 "Open Sans", sans-serif; color: #fff; padding-top: 5px; white-space: nowrap; }
```
